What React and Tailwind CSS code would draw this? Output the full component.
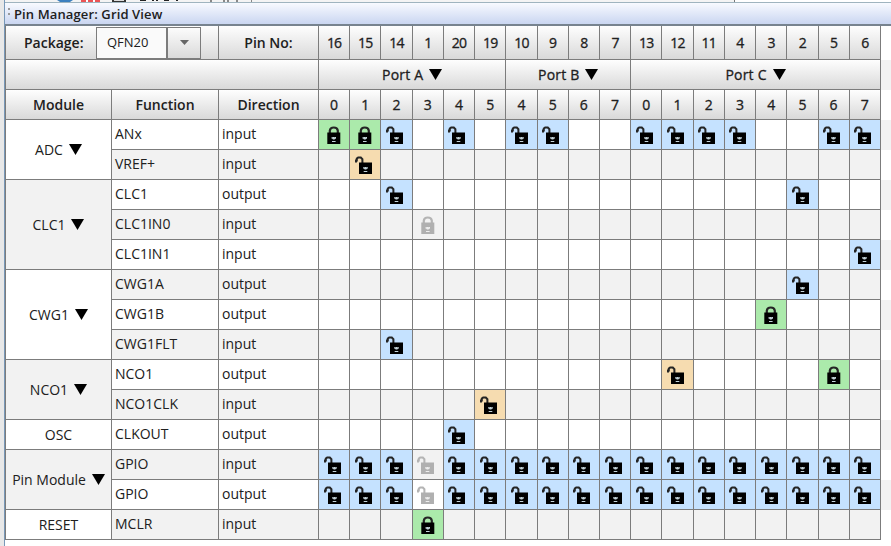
const PINS = [16, 15, 14, 1, 20, 19, 10, 9, 8, 7, 13, 12, 11, 4, 3, 2, 5, 6];
const BITS = [0, 1, 2, 3, 4, 5, 4, 5, 6, 7, 0, 1, 2, 3, 4, 5, 6, 7];

// Cell codes: G locked, B available, O shared, d disabled unlocked, D disabled locked, . empty
const MODULES = [
  { name: 'ADC', menu: true, rows: [['ANx', 'input', 'GGB.B.BB..BBBB..BB'], ['VREF+', 'input', '.O................']] },
  { name: 'CLC1', menu: true, rows: [['CLC1', 'output', '..B............B..'], ['CLC1IN0', 'input', '...D..............'], ['CLC1IN1', 'input', '.................B']] },
  { name: 'CWG1', menu: true, rows: [['CWG1A', 'output', '...............B..'], ['CWG1B', 'output', '..............G...'], ['CWG1FLT', 'input', '..B...............']] },
  { name: 'NCO1', menu: true, rows: [['NCO1', 'output', '...........O....G.'], ['NCO1CLK', 'input', '.....O............']] },
  { name: 'OSC', rows: [['CLKOUT', 'output', '....B.............']] },
  { name: 'Pin Module', menu: true, rows: [['GPIO', 'input', 'BBBdBBBBBBBBBBBBBB'], ['GPIO', 'output', 'BBBdBBBBBBBBBBBBBB']] },
  { name: 'RESET', rows: [['MCLR', 'input', '...G..............']] },
];

const FILL = { G: 'bg-[#abeaab]', B: 'bg-[#c5e2ff]', O: 'bg-[#f6dcb0]' };
const SPAN = { 1: 'row-span-1', 2: 'row-span-2', 3: 'row-span-3' };
const LINE = 'border-r border-b border-[#7c7c7c]';
const HEAD = 'bg-linear-to-b from-[#fefefe] to-[#d9d9d9] flex items-center justify-center';
const MEDIUM = '[-webkit-text-stroke:0.3px]';

function Lock({ open, dim }) {
  const color = dim ? '#b0b0b0' : '#000';
  const hole = dim ? '#eee' : '#c4d4da';
  const shackle = dim ? '#b4b4b4' : '#252525';
  return (
    <svg width="18" height="18" viewBox="0 0 18 18" className={open ? 'mr-[3px] shrink-0' : 'shrink-0'}>
      {open ? (
        <path d="M1 6.6V4.4H1.8V2.6L3.2 1.5H5.8L7.4 3.2V8" fill="none" stroke={shackle} strokeWidth="2" />
      ) : (
        <path d="M4.8 8V4.6Q5.2 1.5 8.8 1.5Q12.4 1.5 12.8 4.6V8" fill="none" stroke={shackle} strokeWidth="2.2" />
      )}
      <g transform={open ? 'translate(1.7 0)' : 'translate(0 0)'}>
        <rect x="2.3" y="6.5" width="13" height="11.5" fill={color} />
        <path d="M6.6 11h1.2v1h2v-1h1.2v1.7h-1.2v.9h-2v-.9h-1.2zM7 15h3.6v1.1h-3.6z" fill={hole} />
        <path d="M7.8 11h2v2h-2z" fill={hole} />
      </g>
    </svg>
  );
}

function Arrow() {
  return (
    <svg width="13" height="11" viewBox="0 0 13 11" className="mb-px ml-1.5 shrink-0">
      <path d="M0 0H13L6.5 11Z" fill="#000" />
    </svg>
  );
}

function Cell({ code, shade }) {
  const locked = code === 'G' || code === 'D';
  return (
    <div className={`${LINE} ${FILL[code] || shade} flex items-center justify-center overflow-hidden`}>
      {code !== '.' && <Lock open={!locked} dim={code === 'd' || code === 'D'} />}
    </div>
  );
}

function Rows() {
  let n = 0;
  return MODULES.map((m, i) => [
    <div key={m.name} className={`${LINE} ${SPAN[m.rows.length]} ${i % 2 ? 'bg-[#f2f2f2]' : 'bg-white'} flex items-center justify-center`}>
      <span>{m.name}</span>
      {m.menu && <Arrow />}
    </div>,
    ...m.rows.map(([fn, dir, cells]) => {
      const shade = n++ % 2 ? 'bg-[#f2f2f2]' : 'bg-white';
      return [
        <div key={`${fn}${dir}f`} className={`${LINE} ${shade} flex items-center pb-0.5 pl-[3px]`}>{fn}</div>,
        <div key={`${fn}${dir}d`} className={`${LINE} ${shade} flex items-center pb-0.5 pl-[3px]`}>{dir}</div>,
        ...cells.split('').map((c, k) => <Cell key={`${fn}${dir}${k}`} code={c} shade={shade} />),
      ];
    }),
  ]);
}

function ToolbarEdge() {
  return (
    <svg width="886" height="2" viewBox="0 0 886 2" className="shrink-0">
      <rect width="729" height="2" fill="#f4f4f4" />
      <rect x="730" width="156" height="2" fill="#fff" />
      <rect x="729" width="1" height="2" fill="#777" />
      <path d="M52 0H68L65 2H55Z" fill="#3c80bf" />
      <path d="M76 0H95V2H76Z" fill="#ec5355" />
      <path d="M81 0H83V2H81ZM88 0H90V2H88Z" fill="#fff" />
      <path d="M107 0H121V2H107Z" fill="#333" />
      <path d="M109 0H119V1H109Z" fill="#ddd" />
      <path d="M135 0H141V1H135ZM147 0H149V1H147ZM151 0H153V1H151ZM159 0H164V1H159ZM171 0H173V1H171Z" fill="#222" />
      <path d="M205 0H207V2H205ZM218 0H220V2H218ZM222 0H224V2H222ZM231 0H233V2H231ZM246 0H247V2H246Z" fill="#888" />
    </svg>
  );
}

export default function App() {
  return (
    <div className="flex h-[546px] w-[891px] overflow-hidden bg-white font-['Open_Sans',sans-serif] text-[14px] leading-[20px] text-[#202020]">
      <div className="w-1 shrink-0 bg-[#e8e8e8]" />
      <div className="flex min-w-0 flex-1 flex-col border-l border-[#7898b8]">
        <ToolbarEdge />
        <div className="flex h-[24px] shrink-0 items-center border-t border-b-2 border-t-[#9fb4bf] border-b-[#77838f] bg-linear-to-b from-[#f8faff] to-[#cad6f1]">
          <div className="ml-[3px] flex flex-col gap-[3px] pb-1">
            <div className="h-[2px] w-[2px] bg-[#999]" />
            <div className="h-[2px] w-[2px] bg-[#999]" />
          </div>
          <span className="ml-1 pt-px text-[13px] font-semibold tracking-[0.12px] whitespace-nowrap">Pin Manager: Grid View</span>
        </div>
        <div className="flex items-start">
          <div className="grid w-[876px] shrink-0 grid-cols-[106px_107px_100px_repeat(18,31.22px)] grid-rows-[34px_30px_30px_repeat(14,30px)] border-l border-[#7c7c7c]">
            <div className={`${LINE} ${HEAD} col-span-2 justify-start! font-semibold`}>
              <span className="ml-[18px] w-[72px]">Package:</span>
              <div className="flex h-[32px] w-[105px] border border-[#7c7c7c]">
                <div className="flex-1 bg-[#fafafa] pt-1 pl-2.5 text-[13px] font-normal">QFN20</div>
                <div className="flex w-[34px] items-center justify-center border-l-2 border-[#7c7c7c]">
                  <svg width="9" height="5" viewBox="0 0 9 5"><path d="M0 0H9L4.5 5Z" fill="#666" /></svg>
                </div>
              </div>
            </div>
            <div className={`${LINE} ${HEAD} font-semibold`}>Pin No:</div>
            {PINS.map((p) => <div key={p} className={`${LINE} ${HEAD} ${MEDIUM} tracking-[-0.8px]`}>{p}</div>)}
            <div className={`${LINE} ${HEAD} col-span-3`} />
            {[['A', 'col-span-6'], ['B', 'col-span-4'], ['C', 'col-span-8']].map(([port, span]) => (
              <div key={port} className={`${LINE} ${HEAD} ${MEDIUM} ${span}`}>
                <span className="tracking-[0.2px]">Port {port}</span>
                <Arrow />
              </div>
            ))}
            {['Module', 'Function', 'Direction'].map((t) => <div key={t} className={`${LINE} ${HEAD} font-semibold`}>{t}</div>)}
            {BITS.map((b, i) => <div key={i} className={`${LINE} ${HEAD} ${MEDIUM}`}>{b}</div>)}
            <Rows />
          </div>
          <div className="flex flex-1 flex-col pt-[34px]">
            {Array.from({ length: 16 }, (_, i) => <div key={i} className={`h-[30px] ${i % 2 ? 'bg-white' : 'bg-[#f2f2f2]'}`} />)}
          </div>
        </div>
      </div>
    </div>
  );
}
